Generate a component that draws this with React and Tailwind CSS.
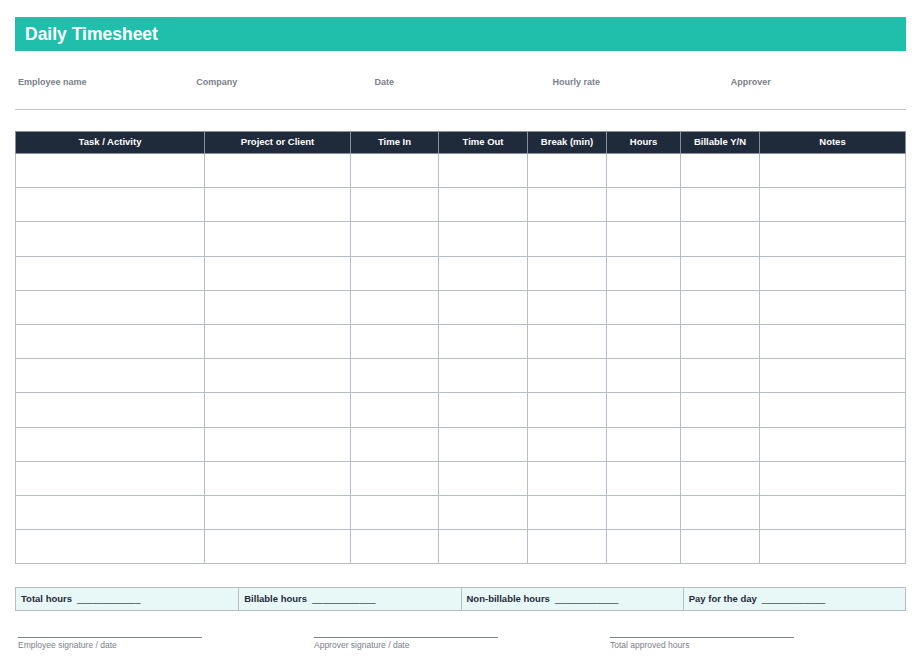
export default function App() {
  const cols = [
    ["Task / Activity", 189],
    ["Project or Client", 146],
    ["Time In", 88],
    ["Time Out", 89],
    ["Break (min)", 79],
    ["Hours", 74],
    ["Billable Y/N", 79],
    ["Notes", 146],
  ];
  const rows = Array.from({ length: 12 });
  return (
    <div className="w-[921px] h-[664px] bg-white px-[15px] pt-[17px]" style={{ fontFamily: '"Liberation Sans", Arial, sans-serif' }}>
      <div className="h-[34px] bg-[#20bfac] flex items-center px-[10px]">
        <span className="text-white font-bold text-[17.5px] mt-[1px]">Daily Timesheet</span>
      </div>
      <div className="grid grid-cols-5 border-b border-[#c4c8cf] h-[59px] pt-[25px]">
        {["Employee name", "Company", "Date", "Hourly rate", "Approver"].map((l) => (
          <div key={l} className="text-[9px] font-bold text-[#7a808a] pl-[3px]">{l}</div>
        ))}
      </div>
      <table className="mt-[21px] border-collapse table-fixed w-[890px]">
        <thead>
          <tr className="h-[22px] bg-[#1f2a3a]">
            {cols.map(([c, w]) => (
              <th key={c} style={{ width: w }} className="border border-[#8a909a] text-white text-[9.5px] font-bold p-0 text-center">{c}</th>
            ))}
          </tr>
        </thead>
        <tbody>
          {rows.map((_, i) => (
            <tr key={i} className="h-[34.2px]">
              {cols.map(([c]) => (
                <td key={c} className="border border-[#b8bcc4] p-0"></td>
              ))}
            </tr>
          ))}
        </tbody>
      </table>
      <div className="mt-[23px] grid grid-cols-4 h-[24px] bg-[#e8f8f6] border border-[#b8bcc4]">
        {["Total hours", "Billable hours", "Non-billable hours", "Pay for the day"].map((l, i) => (
          <div key={l} className={`flex items-center pl-[5px] text-[9.5px] font-bold text-[#1f2a3a] ${i > 0 ? "border-l border-[#b8bcc4]" : ""}`}>
            {l}<span className="ml-[5px] font-normal">____________</span>
          </div>
        ))}
      </div>
      <div className="mt-[26px] grid grid-cols-3 pl-[3px]">
        {["Employee signature / date", "Approver signature / date", "Total approved hours"].map((l) => (
          <div key={l}>
            <div className="w-[184px] border-t border-[#7a808a]"></div>
            <div className="text-[8.5px] text-[#7a808a] mt-[1px]">{l}</div>
          </div>
        ))}
      </div>
    </div>
  );
}
